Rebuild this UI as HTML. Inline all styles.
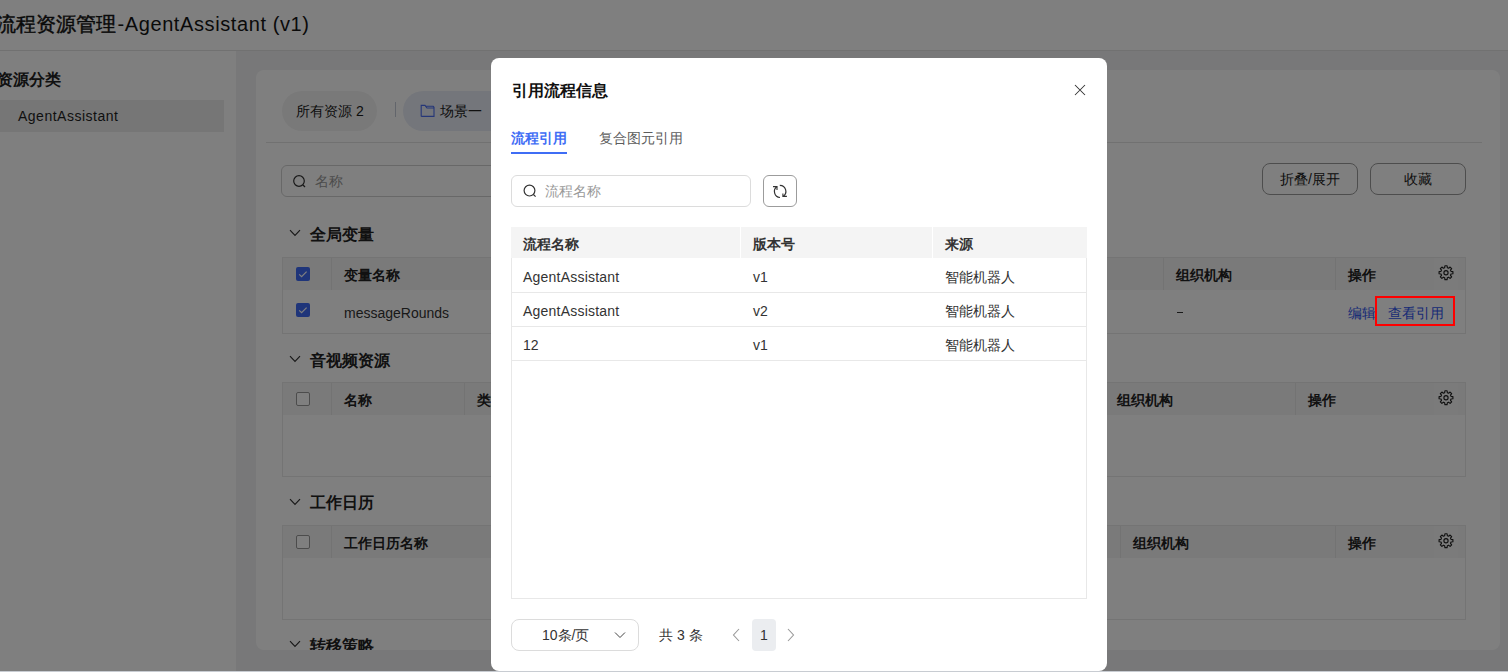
<!DOCTYPE html>
<html><head><meta charset="utf-8">
<style>
*{box-sizing:border-box;margin:0;padding:0}
html,body{width:1508px;height:672px;overflow:hidden}
body{position:relative;background:#f0f1f3;font-family:"Liberation Sans",sans-serif;font-size:14px;color:#333}
.a{position:absolute}
.t{position:absolute;white-space:nowrap;line-height:20px}
.b{font-weight:bold}
.m{font-weight:500}
.hdr{left:0;top:0;width:1508px;height:51px;background:#fff;border-bottom:1px solid #e3e3e3}
.side{left:0;top:51px;width:236px;height:621px;background:#fff}
.card{left:256px;top:70px;width:1244px;height:580px;background:#fff;border-radius:8px;overflow:hidden}
.pill{height:40px;border-radius:20px}
.tbl{border:1px solid #e8e8e8}
.th{background:#f5f5f5}
.sep{width:1px;background:#e6e6e6}
.cb{width:14px;height:14px;border-radius:2px}
.cbon{background:#3f6af5}
.cboff{border:1px solid #999;background:#fff}
.overlay{left:0;top:0;width:1508px;height:672px;background:rgba(0,0,0,0.5)}
.modal{left:491px;top:58px;width:616px;height:613px;background:#fff;border-radius:8px}
</style></head><body>

<!-- page header -->
<div class="a hdr"></div>
<div class="t" style="left:-4px;top:12px;font-size:20px;line-height:24px;color:#141414"><span style="-webkit-text-stroke:0.45px #141414">流程资源管理</span><span style="letter-spacing:0.6px;margin-left:1.5px">-AgentAssistant (v1)</span></div>

<!-- sidebar -->
<div class="a side"></div>
<div class="t b" style="left:-3px;top:70px;font-size:16px;color:#222">资源分类</div>
<div class="a" style="left:0;top:100px;width:224px;height:32px;background:#ececec"></div>
<div class="t" style="left:18px;top:106px;color:#1f1f1f;letter-spacing:0.5px">AgentAssistant</div>

<!-- card -->
<div class="a card">
  <!-- tabs -->
  <div class="a pill" style="left:26px;top:21px;width:95px;background:#f3f3f3"></div>
  <div class="t" style="left:40px;top:31px;color:#1a1a1a">所有资源 2</div>
  <div class="a" style="left:139px;top:32px;width:1px;height:15px;background:#c5cad6"></div>
  <div class="a pill" style="left:147px;top:21px;width:160px;background:#e9edf6"></div>
  <svg class="a" style="left:164px;top:34px" width="16" height="14" viewBox="0 0 16 14"><path d="M1.2 12.4V1.4H5L7 4H14" fill="none" stroke="#4a6cf0" stroke-width="1.1"/><path d="M5.6 2.3H13.2L14 3.3V12.4H1.2" fill="none" stroke="#4a6cf0" stroke-width="1.1"/></svg>
  <div class="t" style="left:184px;top:31px;color:#222">场景一</div>
  <div class="a" style="left:10px;top:72px;width:1216px;height:1px;background:#e2e2e2"></div>
  <!-- search -->
  <div class="a" style="left:25px;top:95px;width:400px;height:32px;border:1px solid #d0d0d0;border-radius:6px"></div>
  <svg class="a" style="left:36px;top:104px" width="16" height="16" viewBox="0 0 16 16"><circle cx="7" cy="7" r="5.3" fill="none" stroke="#333" stroke-width="1.2"/><path d="M11 11L13 13" stroke="#333" stroke-width="1.2"/></svg>
  <div class="t" style="left:59px;top:101px;color:#999">名称</div>
  <div class="a" style="left:1006px;top:93px;width:96px;height:32px;border:1px solid #9a9a9a;border-radius:8px"></div>
  <div class="t" style="left:1006px;top:99px;width:96px;text-align:center;color:#222">折叠/展开</div>
  <div class="a" style="left:1114px;top:93px;width:96px;height:32px;border:1px solid #9a9a9a;border-radius:8px"></div>
  <div class="t" style="left:1114px;top:99px;width:96px;text-align:center;color:#222">收藏</div>
<svg class="a" style="left:33px;top:159px" width="12" height="8" viewBox="0 0 12 8"><path d="M1 1.2L6 6.3L11 1.2" fill="none" stroke="#333" stroke-width="1.2"/></svg><div class="t b" style="left:54px;top:155px;font-size:16px;color:#222">全局变量</div><div class="a tbl" style="left:26px;top:187px;width:1184px;height:77px">
 <div class="a th" style="left:0;top:0;width:1182px;height:32px"></div>
 <div class="a sep" style="left:48px;top:0;height:32px"></div>
 <div class="a sep" style="left:880px;top:0;height:32px"></div>
 <div class="a sep" style="left:1052px;top:0;height:32px"></div>
 <div class="a cb cbon" style="left:13px;top:9px"><svg width="14" height="14" viewBox="0 0 14 14" style="display:block"><path d="M3.2 7.3L5.6 9.7L10.6 4.6" fill="none" stroke="#fff" stroke-width="1.2"/></svg></div>
 <div class="t b" style="left:61px;top:7px;color:#222">变量名称</div>
 <div class="t b" style="left:893px;top:7px;color:#222">组织机构</div>
 <div class="t b" style="left:1065px;top:7px;color:#222">操作</div>
 <div class="a" style="left:1151px;top:0;width:24px;height:32px;background:#f7f7f7"></div>
 <svg class="a" style="left:1155px;top:7px" width="16" height="16" viewBox="0 0 16 16"><path d="M6.65 2.68L6.90 0.79L9.10 0.79L9.35 2.68L10.60 3.20L12.11 2.04L13.66 3.59L12.50 5.10L13.02 6.35L14.91 6.60L14.91 8.80L13.02 9.05L12.50 10.30L13.66 11.81L12.11 13.36L10.60 12.20L9.35 12.72L9.10 14.61L6.90 14.61L6.65 12.72L5.40 12.20L3.89 13.36L2.34 11.81L3.50 10.30L2.98 9.05L1.09 8.80L1.09 6.60L2.98 6.35L3.50 5.10L2.34 3.59L3.89 2.04L5.40 3.20Z" fill="none" stroke="#222" stroke-width="1.15" stroke-linejoin="round"/><circle cx="8" cy="7.7" r="2.1" fill="none" stroke="#222" stroke-width="1.15"/></svg>
 <div class="a cb cbon" style="left:13px;top:45px"><svg width="14" height="14" viewBox="0 0 14 14" style="display:block"><path d="M3.2 7.3L5.6 9.7L10.6 4.6" fill="none" stroke="#fff" stroke-width="1.2"/></svg></div>
 <div class="t" style="left:61px;top:45px;color:#333">messageRounds</div>
 <div class="a" style="left:894px;top:54px;width:6px;height:1px;background:#333"></div>
 <div class="t" style="left:1065px;top:45px;color:#2f54eb">编辑</div>
 <div class="t" style="left:1105px;top:45px;color:#2f54eb">查看引用</div>
</div><svg class="a" style="left:33px;top:285px" width="12" height="8" viewBox="0 0 12 8"><path d="M1 1.2L6 6.3L11 1.2" fill="none" stroke="#333" stroke-width="1.2"/></svg><div class="t b" style="left:54px;top:281px;font-size:16px;color:#222">音视频资源</div><div class="a tbl" style="left:26px;top:312px;width:1184px;height:95px">
 <div class="a th" style="left:0;top:0;width:1182px;height:32px"></div>
 <div class="a sep" style="left:48px;top:0;height:32px"></div>
 <div class="a sep" style="left:181px;top:0;height:32px"></div>
 <div class="a sep" style="left:1012px;top:0;height:32px"></div>
 <div class="a cb cboff" style="left:13px;top:9px"></div>
 <div class="t b" style="left:61px;top:7px;color:#222">名称</div>
 <div class="t b" style="left:194px;top:7px;color:#222">类型</div>
 <div class="t b" style="left:834px;top:7px;color:#222">组织机构</div>
 <div class="t b" style="left:1025px;top:7px;color:#222">操作</div>
 <div class="a" style="left:1151px;top:0;width:24px;height:32px;background:#f7f7f7"></div>
 <svg class="a" style="left:1155px;top:7px" width="16" height="16" viewBox="0 0 16 16"><path d="M6.65 2.68L6.90 0.79L9.10 0.79L9.35 2.68L10.60 3.20L12.11 2.04L13.66 3.59L12.50 5.10L13.02 6.35L14.91 6.60L14.91 8.80L13.02 9.05L12.50 10.30L13.66 11.81L12.11 13.36L10.60 12.20L9.35 12.72L9.10 14.61L6.90 14.61L6.65 12.72L5.40 12.20L3.89 13.36L2.34 11.81L3.50 10.30L2.98 9.05L1.09 8.80L1.09 6.60L2.98 6.35L3.50 5.10L2.34 3.59L3.89 2.04L5.40 3.20Z" fill="none" stroke="#222" stroke-width="1.15" stroke-linejoin="round"/><circle cx="8" cy="7.7" r="2.1" fill="none" stroke="#222" stroke-width="1.15"/></svg>
</div><svg class="a" style="left:33px;top:428px" width="12" height="8" viewBox="0 0 12 8"><path d="M1 1.2L6 6.3L11 1.2" fill="none" stroke="#333" stroke-width="1.2"/></svg><div class="t b" style="left:54px;top:423px;font-size:16px;color:#222">工作日历</div><div class="a tbl" style="left:26px;top:455px;width:1184px;height:95px">
 <div class="a th" style="left:0;top:0;width:1182px;height:32px"></div>
 <div class="a sep" style="left:48px;top:0;height:32px"></div>
 <div class="a sep" style="left:837px;top:0;height:32px"></div>
 <div class="a sep" style="left:1052px;top:0;height:32px"></div>
 <div class="a cb cboff" style="left:13px;top:9px"></div>
 <div class="t b" style="left:61px;top:7px;color:#222">工作日历名称</div>
 <div class="t b" style="left:850px;top:7px;color:#222">组织机构</div>
 <div class="t b" style="left:1065px;top:7px;color:#222">操作</div>
 <div class="a" style="left:1151px;top:0;width:24px;height:32px;background:#f7f7f7"></div>
 <svg class="a" style="left:1155px;top:7px" width="16" height="16" viewBox="0 0 16 16"><path d="M6.65 2.68L6.90 0.79L9.10 0.79L9.35 2.68L10.60 3.20L12.11 2.04L13.66 3.59L12.50 5.10L13.02 6.35L14.91 6.60L14.91 8.80L13.02 9.05L12.50 10.30L13.66 11.81L12.11 13.36L10.60 12.20L9.35 12.72L9.10 14.61L6.90 14.61L6.65 12.72L5.40 12.20L3.89 13.36L2.34 11.81L3.50 10.30L2.98 9.05L1.09 8.80L1.09 6.60L2.98 6.35L3.50 5.10L2.34 3.59L3.89 2.04L5.40 3.20Z" fill="none" stroke="#222" stroke-width="1.15" stroke-linejoin="round"/><circle cx="8" cy="7.7" r="2.1" fill="none" stroke="#222" stroke-width="1.15"/></svg>
</div><svg class="a" style="left:33px;top:570px" width="12" height="8" viewBox="0 0 12 8"><path d="M1 1.2L6 6.3L11 1.2" fill="none" stroke="#333" stroke-width="1.2"/></svg><div class="t b" style="left:54px;top:566px;font-size:16px;color:#222">转移策略</div>
</div>

<!-- overlay -->
<div class="a overlay"></div>

<!-- modal -->
<div class="a modal">
  <div class="t b" style="left:21px;top:23px;font-size:16px;color:#111">引用流程信息</div>
  <svg class="a" style="left:583px;top:26px" width="12" height="12" viewBox="0 0 12 12"><path d="M1 1L11 11M11 1L1 11" stroke="#333" stroke-width="1.05"/></svg>
  <div class="t b" style="left:20px;top:70px;color:#3f6df5">流程引用</div>
  <div class="a" style="left:20px;top:94px;width:56px;height:2px;background:#3f6df5"></div>
  <div class="t" style="left:108px;top:70px;color:#5c5c5c">复合图元引用</div>
  <div class="a" style="left:20px;top:117px;width:240px;height:32px;border:1px solid #dcdcdc;border-radius:6px"></div>
  <svg class="a" style="left:32px;top:126px" width="14" height="14" viewBox="0 0 14 14"><circle cx="6.5" cy="6.6" r="5.4" fill="none" stroke="#333" stroke-width="1.2"/><path d="M10.4 10.5L12.6 12.6" stroke="#333" stroke-width="1.2"/></svg>
  <div class="t" style="left:54px;top:123px;color:#999">流程名称</div>
  <div class="a" style="left:272px;top:117px;width:34px;height:32px;border:1px solid #9c9c9c;border-radius:6px"></div>
  <svg class="a" style="left:281px;top:126px" width="16" height="15" viewBox="0 0 16 15"><path d="M5 2.6A6 6 0 0 0 8 13.5" fill="none" stroke="#333" stroke-width="1.2"/><path d="M1 2.6H5V6" fill="none" stroke="#333" stroke-width="1.1"/><path d="M7.8 1.3A6 6 0 0 1 11 12.4" fill="none" stroke="#333" stroke-width="1.2"/><path d="M10.9 9.4V12.4H14.9" fill="none" stroke="#333" stroke-width="1.1"/></svg>
  <div class="a" style="left:20px;top:169px;width:576px;height:372px;border:1px solid #e8e8e8;border-top:none">
    <div class="a" style="left:-1px;top:0;width:576px;height:31px;background:#f4f4f4"></div>
    <div class="a" style="left:228px;top:0;width:1px;height:31px;background:#fff"></div>
    <div class="a" style="left:420px;top:0;width:1px;height:31px;background:#fff"></div>
    <div class="t b" style="left:11px;top:7px;color:#333">流程名称</div>
    <div class="t b" style="left:241px;top:7px;color:#333">版本号</div>
    <div class="t b" style="left:433px;top:7px;color:#333">来源</div>
    <div class="a" style="left:0;top:65px;width:574px;height:1px;background:#e8e8e8"></div>
    <div class="a" style="left:0;top:99px;width:574px;height:1px;background:#e8e8e8"></div>
    <div class="a" style="left:0;top:133px;width:574px;height:1px;background:#e8e8e8"></div>
    <div class="t" style="left:11px;top:40px;color:#333;letter-spacing:0.22px">AgentAssistant</div>
    <div class="t" style="left:241px;top:40px;color:#333">v1</div>
    <div class="t" style="left:433px;top:40px;color:#333">智能机器人</div>
    <div class="t" style="left:11px;top:74px;color:#333;letter-spacing:0.22px">AgentAssistant</div>
    <div class="t" style="left:241px;top:74px;color:#333">v2</div>
    <div class="t" style="left:433px;top:74px;color:#333">智能机器人</div>
    <div class="t" style="left:11px;top:108px;color:#333">12</div>
    <div class="t" style="left:241px;top:108px;color:#333">v1</div>
    <div class="t" style="left:433px;top:108px;color:#333">智能机器人</div>
  </div>
  <div class="a" style="left:20px;top:561px;width:128px;height:32px;border:1px solid #dcdcdc;border-radius:8px"></div>
  <div class="t" style="left:51px;top:567px;color:#333">10条/页</div>
  <svg class="a" style="left:123px;top:573px" width="12" height="8" viewBox="0 0 12 8"><path d="M1 1.5L6 6.5L11 1.5" fill="none" stroke="#444" stroke-width="1"/></svg>
  <div class="t" style="left:168px;top:567px;color:#333">共 3 条</div>
  <svg class="a" style="left:241px;top:570px" width="8" height="14" viewBox="0 0 8 14"><path d="M7 1L1.5 7L7 13" fill="none" stroke="#999" stroke-width="1.1"/></svg>
  <div class="a" style="left:261px;top:561px;width:24px;height:32px;background:#ebedf0;border-radius:4px"></div>
  <div class="t" style="left:261px;top:567px;width:24px;text-align:center;color:#333">1</div>
  <svg class="a" style="left:296px;top:570px" width="8" height="14" viewBox="0 0 8 14"><path d="M1 1L6.5 7L1 13" fill="none" stroke="#999" stroke-width="1.1"/></svg>
</div>
<div class="a" style="left:1375px;top:296px;width:80px;height:30px;border:2px solid #f00"></div>
<div class="a" style="left:0;top:671px;width:1508px;height:1px;background:#c8ccd2"></div>

</body></html>
